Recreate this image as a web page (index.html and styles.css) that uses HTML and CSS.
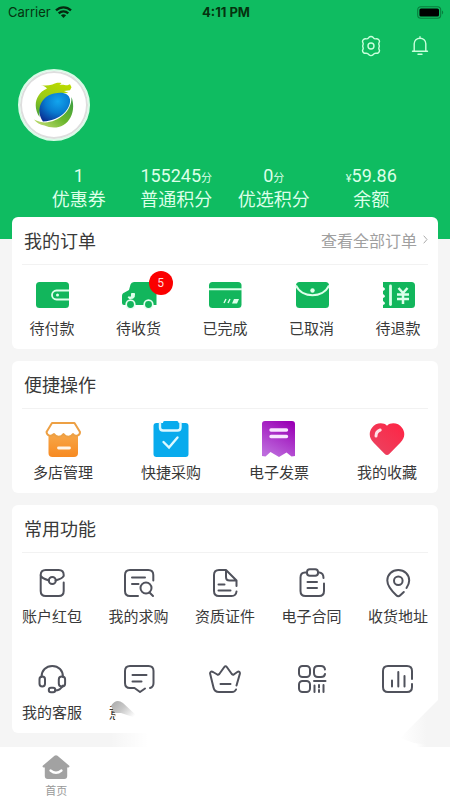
FILE: index.html
```html
<!DOCTYPE html>
<html lang="zh-CN">
<head>
<meta charset="utf-8">
<meta name="viewport" content="width=device-width, initial-scale=1">
<title>我的</title>
<link rel="stylesheet" href="styles.css">
</head>
<body>
<div class="page">
  <header class="hero">
    <div class="status">
      <div class="status-side">
        <span>Carrier</span>
        <svg width="17" height="12" viewBox="0 0 17 12" fill="none" stroke="#05290f" stroke-width="2.3"><path d="M1 4.4C5.3.3 11.7.3 16 4.4"/><path d="M3.700 7.400c2.800-2.600 6.800-2.600 9.600 0"/><path d="M8.500 12 5.900 9.300c1.500-1.300 3.700-1.300 5.200 0z" fill="#05290f" stroke="none"/></svg>
      </div>
      <strong>4:11 PM</strong>
      <div class="status-side status-end">
        <svg width="27" height="13" viewBox="0 0 27 13"><rect x=".7" y=".7" width="23" height="11.6" rx="3.3" fill="none" stroke="#087d3d" stroke-width="1.1"/><rect x="2.4" y="2.4" width="19.6" height="8.2" rx="1.6" fill="#000"/><path d="M25 4.600c1.600.6 1.600 3.200 0 3.800z" fill="#087d3d"/></svg>
      </div>
    </div>
    <div class="actions">
      <button type="button" aria-label="设置"><svg width="24" height="24" viewBox="0 0 24 24" fill="none" stroke="#c9ffdc" stroke-width="1.4" stroke-linejoin="round"><path d="M10 3.300c1-1.100 3-1.100 4 0 .9 1.300 1.800 1.700 3.300 1.500 1.700-.2 3.200 1.200 3.200 2.700 0 .8-.7 1.300-.7 2.200 0 1 .5 1.500.5 2.400s-.5 1.400-.5 2.300c0 1 .7 1.400.7 2.200 0 1.600-1.500 2.900-3.200 2.700-1.500-.2-2.400.2-3.300 1.500-1 1-3 1-4 0-.9-1.300-1.800-1.700-3.300-1.500-1.700.2-3.200-1.100-3.200-2.700 0-.8.7-1.200.7-2.200 0-.9-.5-1.400-.5-2.300s.5-1.400.5-2.400c0-.9-.7-1.400-.7-2.200 0-1.500 1.500-2.900 3.200-2.700 1.500.2 2.400-.2 3.300-1.500z"/><circle cx="12" cy="12" r="3"/></svg></button>
      <button type="button" aria-label="消息"><svg width="24" height="24" viewBox="0 0 24 24" fill="none" stroke="#c9ffdc" stroke-width="1.4" stroke-linecap="round"><path d="M4.500 17.300h15M6.200 17V9.800c0-3.200 2.600-5.600 5.800-5.600s5.800 2.400 5.800 5.600V17M12 4V2.800M10 20.300h4"/></svg></button>
    </div>
    <div class="avatar">
      <svg width="40" height="50" viewBox="0 0 40 50">
        <defs>
          <linearGradient id="dragon" x1=".6" y1="0" x2=".2" y2="1"><stop offset="0" stop-color="#b9d900"/><stop offset=".5" stop-color="#9bcb18"/><stop offset="1" stop-color="#4ba636"/></linearGradient>
          <linearGradient id="tail" x1="1" y1="0" x2="0" y2="1"><stop offset="0" stop-color="#359b45"/><stop offset=".5" stop-color="#6bb62c"/><stop offset="1" stop-color="#cbe07a"/></linearGradient>
          <radialGradient id="pearl" cx=".6" cy=".3" r=".8"><stop offset="0" stop-color="#12a5ee"/><stop offset=".5" stop-color="#087bd0"/><stop offset="1" stop-color="#0a2f92"/></radialGradient>
        </defs>
        <path d="M5.500 37C-1 28 .5 14 13 8.500c-1.500-2-4-3-6.500-3.500 5 1 8 .5 12-.5 3-1.800 6-2 9-1.500l-2 2c4-.5 6 .5 8 .3l2.500-1 1.500 3-1.500 3-6 .7 4.500 2-9 .2C14 14 5 24 5.500 37z" fill="url(#dragon)"/>
        <path d="M9 41.500C2 32 5 17 20 13.500c9-2 15 0 16 6 1 8-8 21-27 22z" fill="url(#pearl)"/>
        <path d="M37.500 17c4 11 .5 23-8 28-7 4-14 2.500-19 .5C6 45 2.500 42.500 0 39.500c4 2 8 3 11 3C25 42 38 31 37.500 17z" fill="url(#tail)"/>
      </svg>
    </div>
    <dl class="stats">
      <div><dt>优惠券</dt><dd>1</dd></div>
      <div><dt>普通积分</dt><dd>155245<small>分</small></dd></div>
      <div><dt>优选积分</dt><dd>0<small>分</small></dd></div>
      <div><dt>余额</dt><dd><small>¥</small>59.86</dd></div>
    </dl>
  </header>

  <main class="cards">
    <section class="card">
      <div class="card-head"><h2>我的订单</h2><a class="more" href="#orders">查看全部订单<svg width="5" height="9" viewBox="0 0 5 9" fill="none" stroke="#aaa" stroke-width="1"><path d="m.7.7 3.300 3.800L.7 8.300"/></svg></a></div>
      <nav class="grid">
        <a href="#pay"><span class="icon"><svg width="34" height="28" viewBox="0 0 34 28"><rect x="1" y="1" width="33" height="26" rx="3.500" fill="#12b65c"/><path d="M34 9.500H21.500a4.500 4.500 0 0 0 0 9H34" fill="none" stroke="#ddffea" stroke-width="1.800"/><circle cx="22.500" cy="14" r="1.500" fill="#ddffea"/></svg></span>待付款</a>
        <a href="#receive"><span class="icon"><svg width="36" height="28" viewBox="0 0 36 28"><path d="M13 1h19q3.500 0 3.500 3.500V24H3q-2 0-2-2v-7c0-2 1-3 2.500-3.500L8 9l1.500-5.500Q10.300 1 13 1z" fill="#12b65c"/><path d="M7 16h3.500v-3.500h3v2q0 3-3 3H8z" fill="#ddffea" stroke="#ddffea"/><g fill="#12b65c" stroke="#e5fff0" stroke-width="1.700"><circle cx="9.500" cy="23.500" r="4.300"/><circle cx="27.500" cy="23.500" r="4.300"/></g></svg><b class="badge">5</b></span>待收货</a>
        <a href="#done"><span class="icon"><svg width="34" height="28" viewBox="0 0 34 28"><rect x="1" y="1" width="32.500" height="26" rx="3.500" fill="#12b65c"/><path d="M1 8.300h33" stroke="#ddffea" stroke-width="2"/><path d="m16 22 2-4M20 22l2-4" stroke="#ddffea" stroke-width="1.400"/><path d="m24 22.500 2-4.500h5l-2 4.500z" fill="#ddffea"/></svg></span>已完成</a>
        <a href="#cancelled"><span class="icon"><svg width="34" height="28" viewBox="0 0 34 28"><rect x="1" y="1" width="33" height="26" rx="3.500" fill="#12b65c"/><path d="M1 4.500C7 17.500 28 17.500 34 4.500" fill="none" stroke="#ddffea" stroke-width="2"/><circle cx="17.500" cy="9.500" r="2.200" fill="#ddffea"/></svg></span>已取消</a>
        <a href="#refund"><span class="icon"><svg width="34" height="28" viewBox="0 0 34 28"><path d="M2 1h28.500Q34 1 34 4.500v19q0 3.500-3.500 3.500H2v-3q4-1.500 0-4v-3q4-1.500 0-4v-3q4-2 0-4z" fill="#12b65c"/><path d="M9.500 5v18.500" stroke="#ddffea" stroke-width="2.800" stroke-linecap="round"/><path d="m17.500 7 4.500 5 4.500-5M16 13.500h12M16 18h12M22 12v11" fill="none" stroke="#ddffea" stroke-width="2.500"/></svg></span>待退款</a>
      </nav>
    </section>

    <section class="card">
      <div class="card-head"><h2>便捷操作</h2></div>
      <nav class="grid grid-four">
        <a href="#stores"><span class="icon"><svg width="36" height="36" viewBox="0 0 36 36"><defs><linearGradient id="shop" x1="0" y1="0" x2="0" y2="1"><stop offset="0" stop-color="#f7a84a"/><stop offset="1" stop-color="#f78a22"/></linearGradient></defs><path d="M3.500 12H33v20q0 4-4 4H7.500q-4 0-4-4z" fill="url(#shop)"/><path d="M7 2h22.500l5.500 9c0 4-5 5-7 2-2 3.500-7 3.500-9.500 0-2.500 3.500-7.500 3.500-9.500 0-2.500 3-7 2-7.500-2z" fill="#fff" stroke="#eda044" stroke-width="2" stroke-linejoin="round"/><path d="M13.500 27h11" stroke="#fff5e8" stroke-width="2.800" stroke-linecap="round"/></svg></span>多店管理</a>
        <a href="#purchase"><span class="icon"><svg width="36" height="36" viewBox="0 0 36 36"><rect x=".5" y="2" width="35" height="34" rx="3" fill="#08abed"/><path d="M7 1v5.500q0 3 3 3h14.500q3 0 3-3V1" fill="none" stroke="#ddf8ff" stroke-width="2.400"/><rect x="10" y="0" width="15.500" height="7" rx="1.500" fill="#08abed"/><path d="m10.500 21 5.500 5.500 8.500-10" fill="none" stroke="#dcf9ff" stroke-width="2.400" stroke-linecap="round"/></svg></span>快捷采购</a>
        <a href="#invoice"><span class="icon"><svg width="36" height="36" viewBox="0 0 36 36"><defs><linearGradient id="bill" x1=".8" y1="0" x2=".3" y2="1"><stop offset="0" stop-color="#9a00b5"/><stop offset="1" stop-color="#bd6bdd"/></linearGradient></defs><path d="M4 0h27q3 0 3 3v32l-3.500.5-5-4-7.500 4.500-8.500-5-5 4.500L1 35V3q0-3 3-3z" fill="url(#bill)"/><path d="M10 9h15.500M10 15.500h15.500" stroke="#f8e6ff" stroke-width="3.400" stroke-linecap="round"/></svg></span>电子发票</a>
        <a href="#favorites"><span class="icon"><svg width="36" height="36" viewBox="0 0 36 36"><defs><linearGradient id="heart" x1="1" y1="0" x2="0" y2="1"><stop offset="0" stop-color="#ff2444"/><stop offset="1" stop-color="#e84663"/></linearGradient></defs><path d="M18 4.700C22 .8 29.500 1.800 33 6.700c3.600 5 2.800 10.300-1.500 14.800L20.500 32.800q-2.500 2.500-5 0l-11-11.300C.2 17-.6 11.700 3 6.700c3.500-4.900 11-5.900 15-2z" fill="url(#heart)"/><path d="M7 15c0-3 1.500-5 4.200-6" fill="none" stroke="#ffe3e9" stroke-width="3" stroke-linecap="round"/></svg></span>我的收藏</a>
      </nav>
    </section>

    <section class="card">
      <div class="card-head"><h2>常用功能</h2></div>
      <nav class="grid line-icons">
        <a href="#packet"><span class="icon"><svg width="32" height="30" viewBox="0 0 32 30"><path d="M13 12.500C8 11 5 9.500 4.500 7M19.500 12.500c5-1.500 7.500-3 8-4.500M27.700 8V7q0-5-5-5h-13q-5 0-5 5v16q0 5 5 5h13q5 0 5-5v-8.500"/><circle cx="16.300" cy="12.500" r="3.500"/></svg></span>账户红包</a>
        <a href="#requests"><span class="icon"><svg width="32" height="30" viewBox="0 0 32 30"><path d="M30.300 12.500V7q0-5-5-5H7Q2 2 2 7v16q0 5 5 5h8M9 9.500h13M9 16h6.500M26.500 24.500l3.500 3.500"/><circle cx="23" cy="20" r="5.500"/></svg></span>我的求购</a>
        <a href="#licences"><span class="icon"><svg width="32" height="30" viewBox="0 0 32 30"><path d="M17 2H10Q5 2 5 7v16q0 5 5 5h12.500q4.500 0 5-4.500M27.500 18v-5.500L17 2v7q0 3.500 3.500 3.500h7M9.500 16.500h6M9.500 22.500h12"/></svg></span>资质证件</a>
        <a href="#contracts"><span class="icon"><svg width="32" height="30" viewBox="0 0 32 30"><path d="M10 4.500H9Q4.500 4.500 4.500 9.500V23q0 5 5 5h13.500q5 0 5-5v-7.500M27.500 10q0-5-4-5.500H22M11.500 14h9.500M11.500 20h9.500"/><rect x="11" y="1.200" width="11" height="6.600" rx="2.800"/></svg></span>电子合同</a>
        <a href="#address"><span class="icon"><svg width="32" height="30" viewBox="0 0 32 30"><path d="M24.500 20c2-3 2.700-5 2.700-7.500C27.200 6.500 22.500 2 16.300 2S5.300 6.500 5.300 12.500c0 5 3 9 9 14.800q2 2 4 0l3.500-3.300"/><circle cx="16.300" cy="12.800" r="4.300"/></svg></span>收货地址</a>
        <a href="#service"><span class="icon"><svg width="32" height="30" viewBox="0 0 32 30"><path d="M5.500 13C5.500 6.500 10 2 16.300 2S27 6.500 27 13M27 21.500C25 25 22 26.500 19 26.500"/><rect x="3.500" y="12.500" width="5.500" height="10" rx="2.700"/><rect x="22.800" y="12.500" width="6.300" height="10" rx="3"/><rect x="12.800" y="23.800" width="6.500" height="4.500" rx="2.200"/></svg></span>我的客服</a>
        <a href="#feedback" class="partial" aria-label="意见反馈"><span class="icon"><svg width="32" height="30" viewBox="0 0 32 30"><path d="M22 24.500l-5 3.500-5.500-4H7q-5 0-5-5V7q0-5 5-5h18.500q5 0 5 5v12q0 4-3.500 5M9.500 11h14M9.500 17.500h9"/></svg></span>意</a>
        <a href="#member" aria-label="会员"><span class="icon"><svg width="32" height="30" viewBox="0 0 32 30"><path d="M27.500 21.500 30.800 10c.5-2-1-3-2.500-2l-3.500 2.500q-1 .5-2-.5l-5-7q-1.200-1.700-2.500 0l-5 7q-1 1-2 .5L4 8C2 7 .7 8.200 1.200 10l3.300 13.500Q5.500 28 10 28h13q3 0 4-2.500M11.500 20h10"/></svg></span></a>
        <a href="#codes" aria-label="二维码"><span class="icon"><svg width="32" height="30" viewBox="0 0 32 30"><rect x="3" y="2" width="11" height="11" rx="3.500"/><rect x="3" y="17" width="11" height="11" rx="3.500"/><path d="M29 5.500Q28.500 2 25 2h-3q-4 0-4 4v3q0 4 4 4h3q3.500 0 4-3M18 17h11.500M18.500 21.500V28M23 21v2.500M23 26v2M27.500 21v7"/></svg></span></a>
        <a href="#reports" aria-label="报表"><span class="icon"><svg width="32" height="30" viewBox="0 0 32 30"><path d="M30 15V7q0-5-5-5H6Q1 2 1 7v16q0 5 5 5h19q5 0 5-5v-3M10 16.500v6M16.300 8v14.500M22.500 12v10.500"/></svg></span></a>
      </nav>
      <svg class="haze" viewBox="0 0 426 60" preserveAspectRatio="none" aria-hidden="true">
        <defs>
          <linearGradient id="fade" x1="0" x2="1" y1="0" y2="0"><stop offset="0" stop-color="#fff" stop-opacity="0"/><stop offset=".12" stop-color="#fff"/><stop offset=".97" stop-color="#fff"/><stop offset="1" stop-color="#fff" stop-opacity="0"/></linearGradient>
          <linearGradient id="smudge" x1="0" x2="1" y1="0" y2=".6"><stop offset="0" stop-color="#a8a8a8"/><stop offset=".5" stop-color="#c8c8c8"/><stop offset="1" stop-color="#fff"/></linearGradient>
          <linearGradient id="corner" x1="0" x2="1" y1="0" y2="0"><stop offset="0" stop-color="#fff"/><stop offset=".7" stop-color="#f5f5f5"/></linearGradient>
        </defs>
        <path d="M104 12H124V36H103z" fill="#fff"/>
        <path d="M98 45H414V60H98z" fill="url(#fade)"/>
        <path d="M99 19q5-8 12-3l15 14q2 2 -2 1l-15-5H103z" fill="url(#smudge)"/>
        <path d="M426 13V59L402 56 388 51z" fill="url(#corner)"/>
      </svg>
    </section>
  </main>

  <nav class="tabs">
    <a href="#home"><svg width="28" height="24" viewBox="0 0 28 24"><path d="M12.500.8q1.500-1.200 3 0L27 10.500q1.200 1.500-.5 2h-1.300V21q0 3-3 3H5.800q-3 0-3-3v-8.500H1.500q-1.700-.5-.5-2z" fill="#a2a2a2"/><path d="M8.500 15.500q5.500 4.500 11 0" fill="none" stroke="#fff" stroke-width="2.300" stroke-linecap="round"/></svg>首页</a>
  </nav>
</div>
</body>
</html>
```
FILE: styles.css
```css
* {
  box-sizing: border-box;
}

body {
  margin: 0;
  background: #f5f5f5;
  color: #393939;
  font-family: Roboto, "Noto Sans CJK SC", sans-serif;
}

a {
  color: inherit;
  text-decoration: none;
}

svg {
  display: block;
}

.page {
  display: flex;
  flex-direction: column;
  min-height: 100vh;
}

.hero {
  padding-bottom: 27px;
  background: #0fbc61;
  color: #dcffe8;
}

.status {
  display: flex;
  align-items: center;
  height: 24px;
  padding: 0 6px 0 8px;
  color: #05330f;
  font: 13px/24px Inter, sans-serif;
}

.status-side {
  display: flex;
  flex: 1;
  align-items: center;
  gap: 4px;
}

.status-end {
  justify-content: flex-end;
}

.actions {
  display: flex;
  justify-content: flex-end;
  gap: 25px;
  padding: 10px 18px 0;
}

.actions button {
  width: 24px;
  height: 24px;
  padding: 0;
  border: 0;
  background: none;
}

.avatar {
  display: grid;
  place-items: center;
  width: 72px;
  height: 72px;
  margin: 11px 18px 0;
  border: 2px solid #d9fbe7;
  border-radius: 50%;
  background: #fff;
  box-shadow: inset 0 0 0 2px #dedede;
}

.stats {
  display: grid;
  grid-template-columns: repeat(4, 1fr);
  margin: 23px 30px 0;
  font-size: 18px;
  line-height: 24px;
  text-align: center;
  white-space: nowrap;
}

.stats div {
  display: flex;
  flex-direction: column-reverse;
}

.stats dd {
  margin: 0;
}

.stats small {
  font-size: 11px;
  line-height: 11px;
}

.cards {
  display: flex;
  flex-direction: column;
  flex: 1;
  gap: 12px;
  margin-top: -22px;
  padding: 0 12px 14px;
}

.hero {
  padding-bottom: 27px;
}

.card {
  position: relative;
  border-radius: 6px;
  background: #fff;
}

.card-head {
  display: flex;
  align-items: center;
  justify-content: space-between;
  height: 48px;
  margin: 0 10px;
  padding: 0 0 2px 2px;
  border-bottom: 1px solid #f2f2f2;
}

.card-head h2 {
  margin: 0;
  font-size: 18px;
  font-weight: 400;
}

.more {
  display: flex;
  align-items: center;
  gap: 6px;
  color: #a0a0a0;
  font-size: 16px;
}

.grid {
  display: grid;
  grid-template-columns: repeat(5, 60px);
  justify-content: space-between;
  row-gap: 35px;
  padding: 12px 10px 10px;
  font-size: 15px;
  line-height: 20px;
  text-align: center;
  white-space: nowrap;
}

.grid a {
  height: 62px;
}

.line-icons {
  row-gap: 34px;
}

.grid-four {
  grid-template-columns: repeat(4, 60px);
  padding: 12px 21px 10px;
}

.icon {
  position: relative;
  display: grid;
  place-items: center;
  height: 36px;
  margin-bottom: 6px;
}

.line-icons svg {
  fill: none;
  stroke: #50525c;
  stroke-width: 2;
  stroke-linecap: round;
  stroke-linejoin: round;
}

.partial {
  text-align: left;
}

.badge {
  position: absolute;
  top: -6px;
  right: -4px;
  width: 24px;
  height: 24px;
  border-radius: 50%;
  background: #fb0000;
  color: #ffdede;
  font-size: 12px;
  font-weight: 400;
  line-height: 24px;
}

.haze {
  position: absolute;
  bottom: -14px;
  left: 0;
  width: 100%;
  height: 60px;
  pointer-events: none;
}

.tabs {
  display: flex;
  background: #fff;
}

.tabs a {
  display: flex;
  flex-direction: column;
  align-items: center;
  gap: 5px;
  width: 25%;
  padding: 8px 0 0;
  color: #999;
  font-size: 11px;
  line-height: 16px;
}
```
